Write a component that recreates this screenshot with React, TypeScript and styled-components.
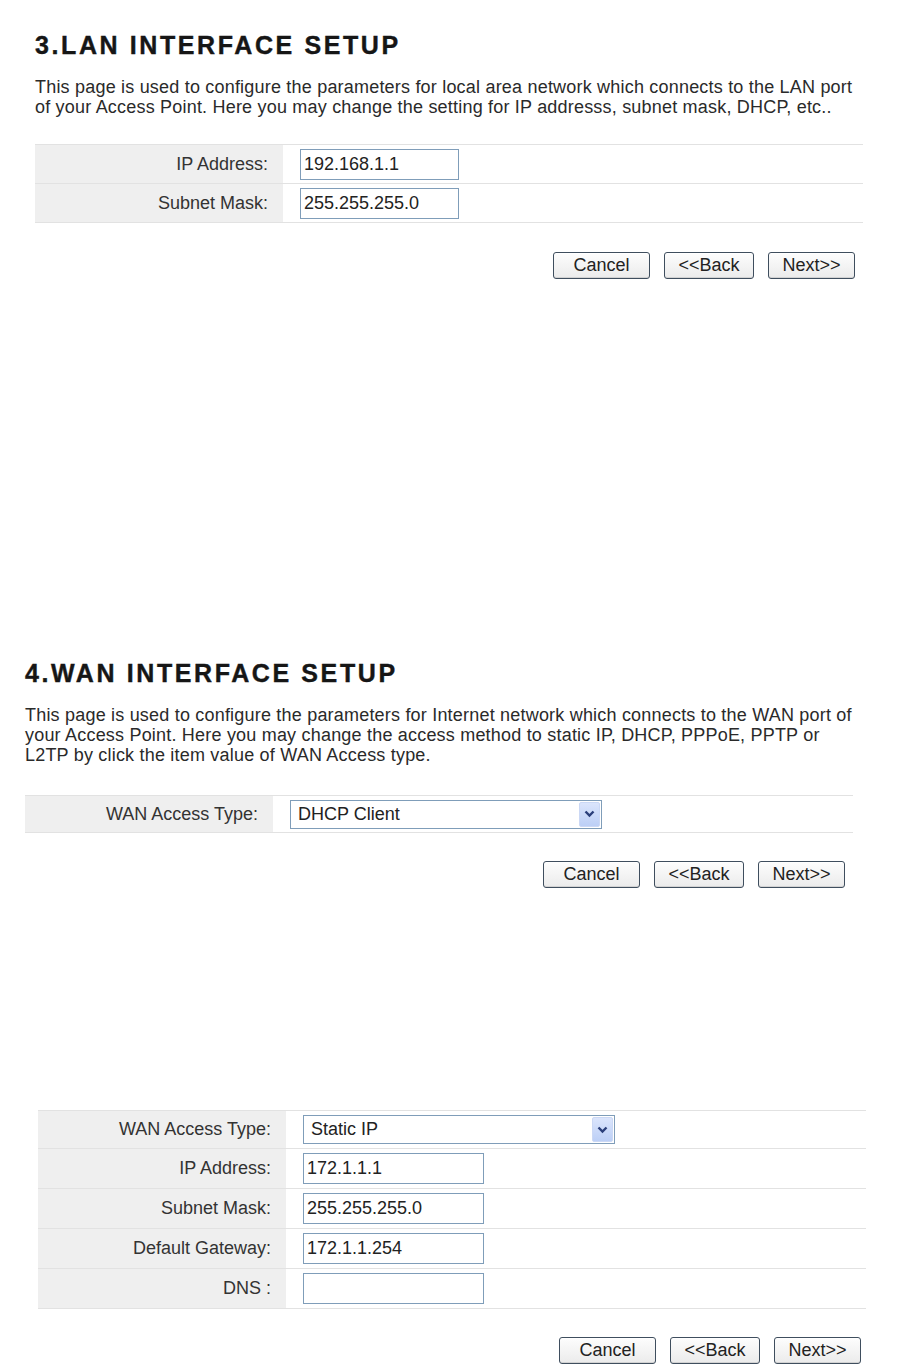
import React from "react";
import styled, { createGlobalStyle } from "styled-components";

const GlobalStyle = createGlobalStyle`
  html, body {
    margin: 0;
    padding: 0;
    background: #fff;
  }
  body {
    font-family: "Liberation Sans", Arial, sans-serif;
    color: #222;
  }
`;

const Page = styled.div`
  width: 902px;
  min-height: 1365px;
  display: flex;
  flex-direction: column;
`;

const Section = styled.section<{ $left: number; $top: number }>`
  margin-top: ${({ $top }) => $top}px;
  padding-left: ${({ $left }) => $left}px;
`;

const Title = styled.h2`
  margin: 0;
  font-size: 25px;
  line-height: 30px;
  font-weight: bold;
  letter-spacing: 2.6px;
  color: #161616;
  -webkit-text-stroke: 0.4px #161616;
`;

const Intro = styled.p`
  margin: 17px 0 0 0;
  font-size: 18px;
  line-height: 20px;
  letter-spacing: 0.2px;
  color: #2a2a2a;
  white-space: nowrap;
`;

const FormTable = styled.div<{ $gap: number }>`
  margin-top: ${({ $gap }) => $gap}px;
  width: 828px;
  border-top: 1px solid #e2e2e2;
`;

const Row = styled.div<{ $height: number }>`
  display: grid;
  grid-template-columns: 248px 1fr;
  height: ${({ $height }) => $height}px;
  border-bottom: 1px solid #e2e2e2;
  box-sizing: border-box;
`;

const LabelCell = styled.div`
  background: #efefef;
  display: flex;
  align-items: center;
  justify-content: flex-end;
  padding-right: 15px;
  font-size: 18px;
  color: #333;
`;

const ValueCell = styled.div`
  display: flex;
  align-items: center;
  padding-left: 17px;
`;

const TextInput = styled.input<{ $width: number }>`
  box-sizing: border-box;
  width: ${({ $width }) => $width}px;
  height: 31px;
  border: 1px solid #7f9db9;
  padding: 0 3px;
  font-family: "Liberation Sans", Arial, sans-serif;
  font-size: 18px;
  color: #222;
  background: #fff;
  outline: none;
`;

const SelectBox = styled.div`
  box-sizing: border-box;
  width: 312px;
  height: 29px;
  border: 1px solid #7f9db9;
  display: flex;
  align-items: center;
  justify-content: space-between;
  padding: 0 1px 0 7px;
  font-size: 18px;
  color: #222;
  background: #fff;
`;

const ArrowButton = styled.span`
  width: 21px;
  height: 25px;
  background: linear-gradient(#dbe5fc, #bccff6);
  border: 1px solid #cbd8f5;
  border-radius: 2px;
  box-sizing: border-box;
  display: flex;
  align-items: center;
  justify-content: center;
`;

const ButtonBar = styled.div<{ $gap: number; $right: number }>`
  width: 828px;
  display: flex;
  justify-content: flex-end;
  gap: 14px;
  margin-top: ${({ $gap }) => $gap}px;
  padding-right: ${({ $right }) => $right}px;
  box-sizing: border-box;
`;

const Button = styled.button<{ $width: number }>`
  width: ${({ $width }) => $width}px;
  height: 27px;
  border: 1px solid #3f4e5e;
  border-radius: 3px;
  background: linear-gradient(#fdfdfd, #ebebeb);
  box-shadow: inset 0 -1px 0 #d2d2d2, inset 0 1px 0 #ffffff;
  font-family: "Liberation Sans", Arial, sans-serif;
  font-size: 18px;
  color: #222;
  padding: 0;
  cursor: pointer;
`;

const Chevron = () => (
  <svg width="11" height="8" viewBox="0 0 11 8">
    <path d="M1.5 1.5 L5.5 5.5 L9.5 1.5" fill="none" stroke="#2b3f7a" strokeWidth="2.4" />
  </svg>
);

type Field = { label: string; value: string };

const Buttons = ({ gap, right }: { gap: number; right: number }) => (
  <ButtonBar $gap={gap} $right={right}>
    <Button $width={97}>Cancel</Button>
    <Button $width={90}>&lt;&lt;Back</Button>
    <Button $width={87}>Next&gt;&gt;</Button>
  </ButtonBar>
);

const lanFields: Field[] = [
  { label: "IP Address:", value: "192.168.1.1" },
  { label: "Subnet Mask:", value: "255.255.255.0" },
];

const staticFields: Field[] = [
  { label: "IP Address:", value: "172.1.1.1" },
  { label: "Subnet Mask:", value: "255.255.255.0" },
  { label: "Default Gateway:", value: "172.1.1.254" },
  { label: "DNS :", value: "" },
];

export default function App() {
  return (
    <Page>
      <GlobalStyle />

      <Section $left={35} $top={30}>
        <Title>3.LAN INTERFACE SETUP</Title>
        <Intro>
          This page is used to configure the parameters for local area network which connects to the LAN port
          <br />
          of your Access Point. Here you may change the setting for IP addresss, subnet mask, DHCP, etc..
        </Intro>
        <FormTable $gap={27}>
          {lanFields.map((f) => (
            <Row key={f.label} $height={39}>
              <LabelCell>{f.label}</LabelCell>
              <ValueCell>
                <TextInput $width={159} defaultValue={f.value} />
              </ValueCell>
            </Row>
          ))}
        </FormTable>
        <Buttons gap={29} right={8} />
      </Section>

      <Section $left={25} $top={379}>
        <Title>4.WAN INTERFACE SETUP</Title>
        <Intro>
          This page is used to configure the parameters for Internet network which connects to the WAN port of
          <br />
          your Access Point. Here you may change the access method to static IP, DHCP, PPPoE, PPTP or
          <br />
          L2TP by click the item value of WAN Access type.
        </Intro>
        <FormTable $gap={30}>
          <Row $height={37}>
            <LabelCell>WAN Access Type:</LabelCell>
            <ValueCell>
              <SelectBox>
                DHCP Client
                <ArrowButton>
                  <Chevron />
                </ArrowButton>
              </SelectBox>
            </ValueCell>
          </Row>
        </FormTable>
        <Buttons gap={28} right={8} />
      </Section>

      <Section $left={38} $top={222}>
        <FormTable $gap={0}>
          <Row $height={38}>
            <LabelCell>WAN Access Type:</LabelCell>
            <ValueCell>
              <SelectBox>
                Static IP
                <ArrowButton>
                  <Chevron />
                </ArrowButton>
              </SelectBox>
            </ValueCell>
          </Row>
          {staticFields.map((f) => (
            <Row key={f.label} $height={40}>
              <LabelCell>{f.label}</LabelCell>
              <ValueCell>
                <TextInput $width={181} defaultValue={f.value} />
              </ValueCell>
            </Row>
          ))}
        </FormTable>
        <Buttons gap={28} right={5} />
      </Section>
    </Page>
  );
}
